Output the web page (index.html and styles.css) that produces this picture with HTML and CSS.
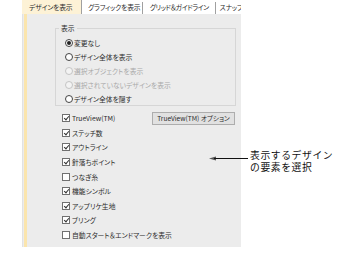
FILE: index.html
```html
<!DOCTYPE html>
<html lang="ja">
<head>
    <meta charset="UTF-8">
    <title>デザインを表示</title>
    <link rel="stylesheet" href="styles.css">
</head>
<body>
    <div class="window">
        <div class="tabs">
            <div class="tab active">デザインを表示</div>
            <div class="tab">グラフィックを表示</div>
            <div class="tab">グリッド＆ガイドライン</div>
            <div class="tab">スナップ</div>
        </div>

        <div class="panel">
            <div class="group">
                <div class="group-title">表示</div>
                <ul class="radios">
                    <li><span class="radio checked"></span>変更なし</li>
                    <li><span class="radio"></span>デザイン全体を表示</li>
                    <li class="disabled"><span class="radio"></span>選択オブジェクトを表示</li>
                    <li class="disabled"><span class="radio"></span>選択されていないデザインを表示</li>
                    <li><span class="radio"></span>デザイン全体を隠す</li>
                </ul>
            </div>

            <ul class="checks">
                <li class="first-row">
                    <span class="check"><span class="box on"></span>TrueView(TM)</span>
                    <button class="opt-btn">TrueView(TM) オプション</button>
                </li>
                <li><span class="box on"></span>ステッチ数</li>
                <li><span class="box on"></span>アウトライン</li>
                <li><span class="box on"></span>針落ちポイント</li>
                <li><span class="box"></span>つなぎ糸</li>
                <li><span class="box on"></span>機能シンボル</li>
                <li><span class="box on"></span>アップリケ生地</li>
                <li><span class="box on"></span>ブリング</li>
                <li><span class="box"></span>自動スタート＆エンドマークを表示</li>
            </ul>
        </div>
    </div>

    <!-- callout pointing at the option list -->
    <div class="callout">
        <svg class="arrow" width="39" height="7" viewBox="0 0 39 7">
            <path d="M0 3.5 L7 1.5 L7 5.5 Z" fill="#555"/>
            <line x1="5" y1="3.5" x2="39" y2="3.5" stroke="#111" stroke-width="1"/>
        </svg>
        <div class="callout-text">
            <div class="callout-line">表示するデザイン</div>
            <div class="callout-line">の要素を選択</div>
        </div>
    </div>
</body>
</html>
```

FILE: styles.css
```css
body {
    margin: 0;
    background: #fff;
    font-family: "Noto Sans CJK JP", "Liberation Sans", sans-serif;
    color: #2b2b2b;
}

.window {
    margin-left: 22px;
    width: 219px;
    font-size: 6.8px;
    font-feature-settings: "palt";
}

/* tabs */
.tabs {
    display: flex;
    height: 14px;
    overflow: hidden;
    white-space: nowrap;
    letter-spacing: -0.2px;
}
.tab {
    padding-left: 7px;
    box-sizing: border-box;
    border-right: 1px solid #a0a0a0;
    margin-top: 2px;
    line-height: 11px;
    height: 12px;
    overflow: hidden;
}
.tab:nth-child(1) { width: 65px; }
.tab:nth-child(2) { width: 66px; padding-left: 6px; }
.tab:nth-child(3) { width: 79px; letter-spacing: -0.45px; }
.tab:nth-child(4) { border-right: none; padding-left: 4px; }
.tab.active {
    background: #fdf2d6;
    margin-top: 0;
    height: 14px;
    padding-top: 2px;
}

/* panel body */
.panel {
    height: 233px;
    background: linear-gradient(to right, #e2e2e2 0 1px, #ececec 1px 2px, #fbe5ad 2px 5px, #ececec 5px);
    padding-top: 14px;
    box-sizing: border-box;
}

.group {
    margin-left: 33px;
    width: 179px;
    height: 76px;
    border: 1px solid #d6d6d6;
}
.group-title {
    width: fit-content;
    margin: -6px 0 0 3px;
    padding: 0 2px;
    background: #ececec;
    line-height: 10px;
}

ul {
    list-style: none;
    margin: 0;
    padding: 0;
}

.radios {
    margin-top: 3px;
    padding-left: 9px;
}
.radios li {
    display: flex;
    align-items: center;
    height: 14px;
}
.radios li.disabled {
    color: #a9a9a9;
}
.radio {
    width: 6px;
    height: 6px;
    border: 1px solid #444;
    border-radius: 50%;
    background: #fff;
    margin-right: 1px;
    display: flex;
    align-items: center;
    justify-content: center;
}
.radio.checked::after {
    content: "";
    width: 4px;
    height: 4px;
    border-radius: 50%;
    background: #222;
}
.disabled .radio {
    border-color: #c4c4c4;
    background: #f3f3f3;
}

/* checkboxes */
.checks {
    margin-top: 5px;
    padding-left: 40px;
    width: 173px;
}
.checks li {
    display: flex;
    align-items: center;
    height: 14.6px;
    white-space: nowrap;
}
.checks .first-row {
    justify-content: space-between;
}
.check {
    display: flex;
    align-items: center;
}
.box {
    width: 6px;
    height: 6px;
    border: 1px solid #707070;
    background: #fff;
    margin-right: 2px;
    position: relative;
}
.box.on::after {
    content: "";
    position: absolute;
    left: 2px;
    top: 0;
    width: 2px;
    height: 4px;
    border-right: 1px solid #333;
    border-bottom: 1px solid #333;
    transform: rotate(40deg);
}

.opt-btn {
    width: 83px;
    height: 13px;
    padding: 0;
    background: #e1e1e1;
    border: 1px solid #adadad;
    font-family: inherit;
    font-size: 6.6px;
    font-feature-settings: "palt";
    color: #2b2b2b;
    line-height: 11px;
}

/* callout */
.callout {
    position: absolute;
    left: 209px;
    top: 150px;
    display: flex;
    align-items: flex-start;
}
.arrow {
    margin-top: 5px;
}
.callout-text {
    margin-left: 2px;
    font-size: 9.8px;
    letter-spacing: 0.6px;
    color: #111;
}
.callout-line {
    height: 11.5px;
    line-height: 11.5px;
    white-space: nowrap;
}
```
